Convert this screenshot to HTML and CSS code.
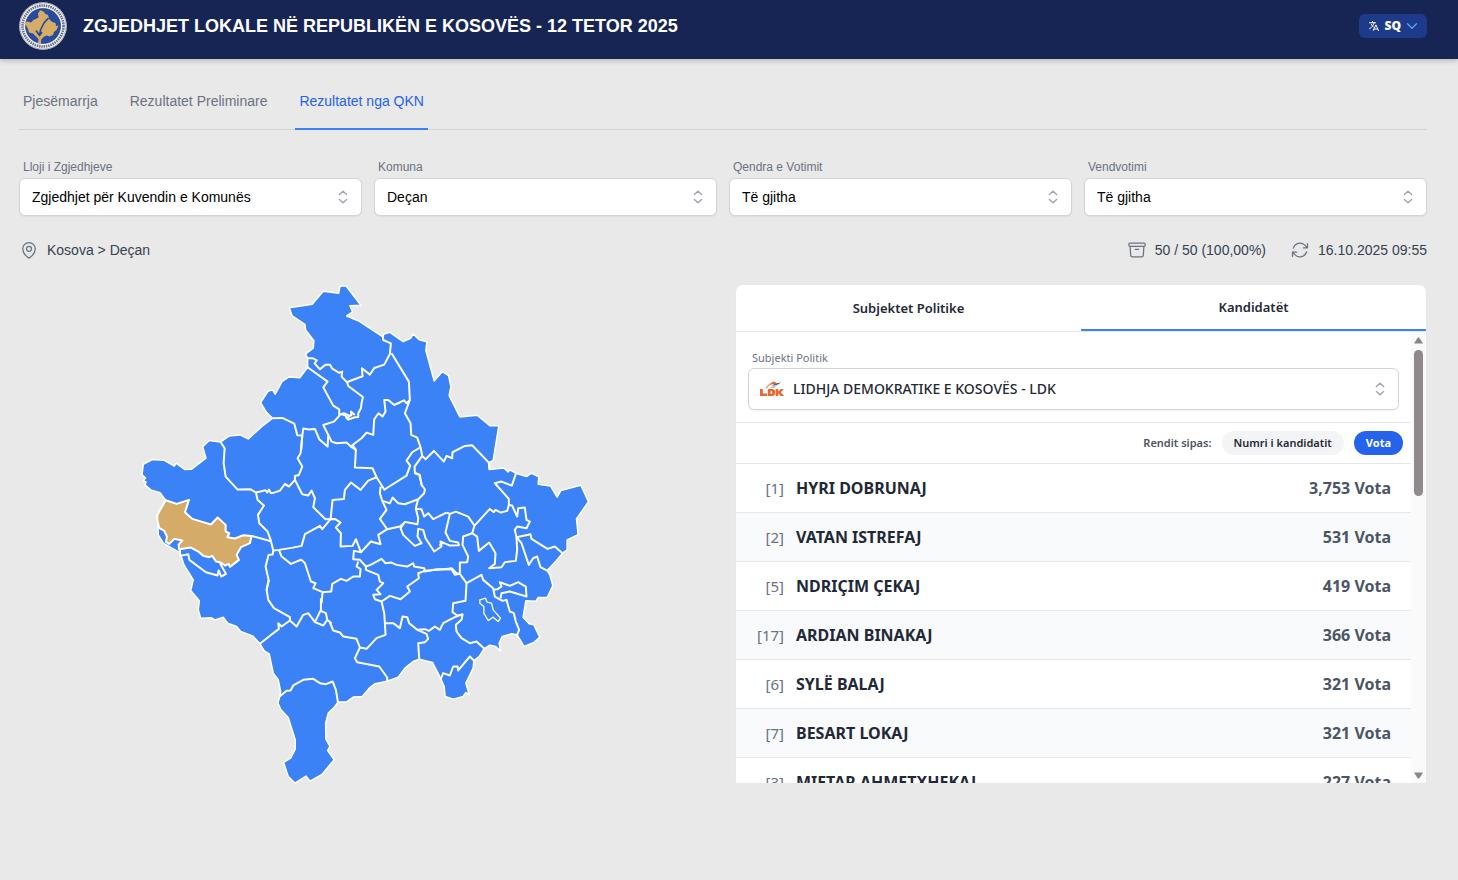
FILE: index.html
```html
<!DOCTYPE html>
<html lang="sq">
<head>
<meta charset="utf-8">
<meta name="viewport" content="width=device-width, initial-scale=1">
<title>Zgjedhjet Lokale në Republikën e Kosovës</title>
<link rel="stylesheet" href="styles.css">
</head>
<body>
<header class="topbar">
  <svg class="emblem" viewBox="0 0 48 48" aria-hidden="true">
    <circle cx="24" cy="24" r="23.8" fill="#f3f3f5"/>
    <circle cx="24" cy="24" r="23.2" fill="none" stroke="#8d93a5" stroke-width=".8"/>
    <circle cx="24" cy="24" r="20.500" fill="none" stroke="#6a7188" stroke-width="2.600" stroke-dasharray="1.500 .8"/>
    <circle cx="24" cy="24" r="17.600" fill="#1f459a" stroke="#263c78" stroke-width=".6"/>
    <g fill="none" stroke="#4a70b4" stroke-width=".4"><circle cx="24" cy="24" r="16.200"/><circle cx="24" cy="24" r="14.500"/><circle cx="24" cy="24" r="12.500"/></g>
    <path fill="#d6ac67" d="M19.500 10.500l2-2.200 3 1.200 2 2.500 2.500 1 1.500 4.500 3 2.500 3 1 .5 3 2.500-.5-2 4.500-2.500 2-1 3-3.500 1.500-3-1-3.500 2-2 2.500v3.500l-1.500 1-1.500-2 1-3-3-3-3-3-4-1-1-3.500-1.500-3-2.500-2.500 3-2 4 1 2.500-2.500 5-2.500-.5-4z"/>
    <path fill="none" stroke="#1f459a" stroke-width="1.500" d="M17 28.500l3.500 5 1-5.500 3.500-7 4.500-5M20.500 33.500l2.500-3.500"/>
    <path stroke="#d6ac67" stroke-width="2.400" d="M20.800 34.500v5"/>
  </svg>
  <h1 class="title">ZGJEDHJET LOKALE NË REPUBLIKËN E KOSOVËS - 12 TETOR 2025</h1>
  <button class="lang" type="button" aria-haspopup="menu">
    <svg class="lang-icon" viewBox="0 0 24 24" aria-hidden="true"><path d="m10.500 21 5.250-11.250L21 21m-9-3h7.500M3 5.621a48.474 48.474 0 0 1 6-.371m0 0c1.120 0 2.233.038 3.334.114M9 5.250V3m3.334 2.364C11.176 10.658 7.690 15.080 3 17.502m9.334-12.138c.896.061 1.785.147 2.666.257m-4.589 8.495a18.023 18.023 0 0 1-3.827-5.802"/></svg>
    <span>SQ</span>
    <svg class="lang-chevron" viewBox="0 0 24 24" aria-hidden="true"><path d="m21 7.500-9 9-9-9"/></svg>
  </button>
</header>

<main class="page">
  <nav class="tabs">
    <a class="tab" href="#pjesemarrja">Pjesëmarrja</a>
    <a class="tab" href="#preliminare">Rezultatet Preliminare</a>
    <a class="tab tab-active" href="#qkn" aria-current="page">Rezultatet nga QKN</a>
  </nav>

  <form class="filters">
    <div class="field">
      <label for="lloji">Lloji i Zgjedhjeve</label>
      <div class="select-box"><select id="lloji"><option>Zgjedhjet për Kuvendin e Komunës</option></select>
      <svg class="updown" viewBox="0 0 20 20" aria-hidden="true"><path d="M6 7.200 10 3.700l4 3.500M6 12.800l4 3.500 4-3.500"/></svg></div>
    </div>
    <div class="field">
      <label for="komuna">Komuna</label>
      <div class="select-box"><select id="komuna"><option>Deçan</option></select>
      <svg class="updown" viewBox="0 0 20 20" aria-hidden="true"><path d="M6 7.200 10 3.700l4 3.500M6 12.800l4 3.500 4-3.500"/></svg></div>
    </div>
    <div class="field">
      <label for="qendra">Qendra e Votimit</label>
      <div class="select-box"><select id="qendra"><option>Të gjitha</option></select>
      <svg class="updown" viewBox="0 0 20 20" aria-hidden="true"><path d="M6 7.200 10 3.700l4 3.500M6 12.800l4 3.500 4-3.500"/></svg></div>
    </div>
    <div class="field">
      <label for="vendvotimi">Vendvotimi</label>
      <div class="select-box"><select id="vendvotimi"><option>Të gjitha</option></select>
      <svg class="updown" viewBox="0 0 20 20" aria-hidden="true"><path d="M6 7.200 10 3.700l4 3.500M6 12.800l4 3.500 4-3.500"/></svg></div>
    </div>
  </form>

  <div class="status">
    <div class="status-item">
      <svg class="icon" viewBox="0 0 24 24" aria-hidden="true"><path d="M15 10.500a3 3 0 1 1-6 0 3 3 0 0 1 6 0Z"/><path d="M19.500 10.500c0 7.142-7.500 11.250-7.500 11.250S4.500 17.642 4.500 10.500a7.500 7.500 0 1 1 15 0Z"/></svg>
      <span>Kosova &gt; Deçan</span>
    </div>
    <div class="status-group">
      <div class="status-item">
        <svg class="icon" viewBox="0 0 24 24" aria-hidden="true"><path d="m20.250 7.500-.625 10.632a2.250 2.250 0 0 1-2.247 2.118H6.622a2.250 2.250 0 0 1-2.247-2.118L3.750 7.500M10 11.250h4M3.375 7.500h17.250c.621 0 1.125-.504 1.125-1.125v-1.500c0-.621-.504-1.125-1.125-1.125H3.375c-.621 0-1.125.504-1.125 1.125v1.500c0 .621.504 1.125 1.125 1.125Z"/></svg>
        <span>50 / 50 (100,00%)</span>
      </div>
      <div class="status-item">
        <svg class="icon" viewBox="0 0 24 24" aria-hidden="true"><path d="M16.023 9.348h4.992v-.001M2.985 19.644v-4.992m0 0h4.992m-4.993 0 3.181 3.183a8.250 8.250 0 0 0 13.803-3.700M4.031 9.865a8.250 8.250 0 0 1 13.803-3.700l3.181 3.182m0-4.991v4.990"/></svg>
        <span>16.10.2025 09:55</span>
      </div>
    </div>
  </div>

  <div class="content">
    <div class="map-panel">
      <svg class="map" viewBox="140 284 450 500" role="img" aria-label="Harta e komunave të Kosovës">
        <path class="land" d="M289.300 307.700L292.300 316 305 324.300 305.700 330 314 340.700 313.300 348.300 305.700 354 307.700 358.300V367.300L300 377.700 289 377 282.300 381.300 275.300 394.300 272.700 390 268.300 391 260.700 402.700 266.700 412.700 272.700 418.300 261.700 426.700 248.300 439 240 435 229.300 436 220.700 442 209 440.700 202.700 446.700 206 458.300 191.700 469.300 185 469.700 176 463.300 174.300 466.300 164 460.300 152.300 459.700 143.300 464.300 142 475 145.500 478 143.500 481 146 482 145 485 150.700 490 160 492.700 165.700 500.300 157.300 515 158.300 535 163.300 543.300 180 552.700 184 565 193.300 580 190.700 590.700 199.300 601 198.300 610 200.700 618.300 211.700 618 215 620 223.300 617.300 227.700 623.300 236.700 626.700 240.700 631.700 252.700 636 260 644 264.300 651 269.300 654 273.300 673.300 278.300 680 280.700 691.700 279.700 696.700 278 703.300 281 710 288.300 717.700 295.300 740V749.300L290.700 758.300 283.700 762.700 288.300 776.700 295 783.300 306 776.300 310 781.300 321.700 775 334.300 760 327.700 750.700 330 746.700 326 739.300 325.700 723.300 328.300 713.300 335 706.700 338 702.300 346.700 702 353.300 697.300 362.300 696.700 370 687.700 375 684 387.300 681.300 398.300 677.300 405 668.300 413.300 661.700 419.300 659.300 432.700 662.700 441 679 444.300 686.700 445.300 696.700 453.300 699.300 463.300 696.700 466 692.700 469.300 695 466 683.300 473.300 668.300 474 660.700 479.300 656.700 484.300 648.700 490 645.300 496 646.700 500.700 651.300 499.300 643.300 502.300 636.700 511.700 634 517.300 635 524.300 646.700 534 642.700 540 637.300 534 625 529.300 624 523.300 617.300 526 601 536 601.300 538.300 597.700 547.300 597.700 553 585.700 550 575 547.300 570.700 556.700 560.700 562.700 553.300 567.300 550V540L578.300 534.700 576.700 519 588.700 501.700 581 485.300 561 490.700 557.300 497.300 550.700 486 538.300 484.300 539 477 531.700 473.300 526.700 476.700 516 473.300 510 470 508.300 472 504 468 489.300 469.700 488.700 462.700 493.300 460.700 499 425.700H490L477.300 415.300 460 417 449.300 395.700 451 386.700 448.700 375.700 442.300 371.700 434.300 381 426 350.700 427 341.700 419.300 339.700 413.300 334 410.700 338.300 403.300 341.700 390 332.300 384.300 334 382.700 336.700 358.300 320.700 346.700 316 352.700 312 350 305.700 361 305.300 346 285.700 340 286.300 338.700 293.300 323.300 291.300 312.300 304.300Z"/>
        <g class="borders" transform="translate(240 280) scale(.33333)">
          <path d="M203 235L219 235 231 241 224 250 240 268 257 254 270 254 277 266 298 279 307 275 305 290 322 308 325 318 369 351 365 370 363 385 355 400 355 411 345 412 325 419 315 405 298 402"/>
          <path d="M322 306L368 289 366 265 390 284 403 264 433 254 450 222 453 190 430 180 428 165"/>
          <path d="M203 262L263 305 250 322 280 377 298 388 298 408 282 425 250 435 265 465 263 500 238 478 225 447 207 449 190 446 187 467 172 466 163 431 127 414 98 415"/>
          <path d="M300 404L312 400 330 408 320 415 335 405 333 395 345 405M187 467L184 510M333 500L348 510"/>
          <path d="M265 465L275 485 290 490 320 488 333 500 345 490 365 475 380 458 400 465 403 418 416 400 428 410 437 395 433 360 445 360 463 375 480 368"/>
        </g>
        <g class="borders" transform="translate(370 320) scale(.33333)">
          <path d="M65 100L117 185 120 240 105 280 122 310 124 345 142 353 152 382 157 408 167 418 192 393 222 425 230 408 247 415 248 397 285 378 307 376 357 428 360 447"/>
          <path d="M75 254L102 241 110 250 120 240M152 382L127 397 110 422 121 437 110 467 45 508"/>
          <path d="M157 408L134 440 135 460 148 465 157 500"/>
        </g>
        <g class="borders" transform="translate(130 420) scale(.33333)">
          <path d="M272 66L284 85 281 130 287 170 323 209 362 208 378 218 407 211 412 218 417 209 422 219 430 219 450 212 465 192 477 200 495 180 495 168 507 165 517 140 503 115 512 100 517 47"/>
          <path d="M378 218L383 240 402 257 384 285 388 310 413 335 423 362"/>
          <path d="M365 348L423 364 430 392 447 390 485 384"/>
          <path d="M430 392L428 404 416 405 407 440 416 480 410 510M447 390L455 410 483 432 515 419"/>
          <path d="M150 388L150 408 175 403 178 420 228 457 263 467 266 452 274 470 288 462 270 430"/>
          <path class="selected" d="M107 241L140 252 177 240 165 277 187 297 243 314 263 293 287 315 287 335 298 340 292 352 315 356 340 346 365 348 360 370 333 382 320 405 327 420 300 441 296 432 285 437 270 427 258 425 247 408 238 412 220 408 205 395 183 383 147 388 146 374 157 362 133 357 118 372 108 366 111 350 102 332 88 325 82 300 82 285Z"/>
        </g>
        <g class="borders" transform="translate(290 430) scale(.33333)">
          <path d="M15 150L37 193 55 197 65 182 75 205 70 232 107 268 135 267 152 278 138 293 153 310 152 350 188 348 198 328 213 367 192 363 190 388 210 390 228 410 242 405 275 387 287 400 305 398 320 405 352 410 370 400 373 410 403 415 405 425 440 418 480 418"/>
          <path d="M122 268L97 298 90 288 45 313 35 348 5 354M122 268L128 210 162 207 165 180 183 158 212 180 235 152 260 142 248 115 195 113 198 60 187 45"/>
          <path d="M260 142L285 182M272 170L270 190 277 213 290 240 270 267 292 298 330 290 340 282"/>
          <path d="M277 213L300 220 308 203 325 220 345 223 385 208 403 190 405 178 395 165 390 135 375 128"/>
          <path d="M385 208L380 225 378 237 385 265 383 283 345 276 332 295 340 315 375 348 395 340 383 320 385 297 400 300 407 325 433 365 455 350 452 335 462 342"/>
          <path d="M378 237L395 238 403 260 415 250 430 268 470 248M292 298L265 315 272 343 243 335 213 367"/>
          <path d="M205 395L200 410 212 418 210 440 190 440 170 453 153 447 127 462 124 485 98 487 70 475 77 460 63 455 45 400 35 390M98 487L95 520"/>
        </g>
        <g class="borders" transform="translate(430 440) scale(.33333)">
          <path d="M258 102L246 137 215 125 195 130 237 177 237 195 232 213 213 218 197 210 192 217 180 207 134 257 115 230 78 215 60 222 47 278 60 303 85 308 87 316 60 317 35 306 30 318"/>
          <path d="M50 218L60 222M237 195L247 197 262 230 265 205 285 203 290 240 300 245 290 265 262 260 255 270 260 292 302 283 305 297 353 327 375 320 398 340"/>
          <path d="M260 292L275 310 297 375 310 355 322 350 332 382 352 392"/>
          <path d="M134 257L127 280 100 290 98 315 115 350 112 367 90 368 90 402 110 430 155 405 160 420 190 445 195 470 218 483 230 480 240 515 252 520 258 545 268 570 262 585"/>
          <path d="M127 280L142 290 147 333 178 308 197 340 195 372 178 385 215 382 225 367 258 363 262 330 260 292M90 402L80 400 65 385 45 388"/>
          <path d="M110 430L107 483 70 490 68 517 82 527 98 525 95 540 78 555 80 575 95 595 120 610 140 605 163 626"/>
          <path d="M190 450L203 448 215 440 210 427 240 438 265 427 288 440 290 470 240 455 215 460 212 475"/>
          <path class="thin" d="M150 480L167 475 172 487 185 490 190 510 212 535 205 545 190 532 175 542 162 520 162 500 150 490Z"/>
        </g>
        <g class="borders" transform="translate(180 530) scale(.33333)">
          <path d="M240 342L270 318 297 297 295 280 305 290 330 272 330 262 282 235 265 210 260 180 267 150M330 272L350 290 370 255 385 250 405 277 423 240 423 205"/>
          <path d="M405 277L430 287 442 270 438 250 423 243M442 270L455 280"/>
          <path d="M299 500L320 483 332 482 340 467 370 450 400 447 420 460 438 463 458 455 468 480 474 517"/>
        </g>
        <g class="borders" transform="translate(330 540) scale(.33333)">
          <path d="M0 248L10 272 30 278 40 290 80 297 90 323 75 355 82 367 148 380 172 413 172 424M90 323L110 327 140 295 167 285 165 250 163 220 155 185 135 178 130 165 152 163 140 150 160 130 150 125 145 105 108 90 108 80"/>
          <path d="M155 185L180 168 212 178 240 155 232 140 267 115 265 100 285 93 345 88 365 88 375 105 390 102"/>
          <path d="M165 250L190 250 210 265 218 230 232 232 238 250 262 270 290 282 295 297 285 307 265 310 268 358M262 270L285 268 297 273 315 260 330 270 340 250 372 233 400 222"/>
          <path d="M333 417L340 400 360 407 370 380 383 380 385 392 420 350 432 362"/>
        </g>
      </svg>
    </div>

    <section class="results">
      <div class="result-tabs" role="tablist">
        <button class="result-tab" type="button" role="tab" aria-selected="false">Subjektet Politike</button>
        <button class="result-tab result-tab-active" type="button" role="tab" aria-selected="true">Kandidatët</button>
      </div>
      <div class="scroll-area">
        <div class="scroll-content">
          <div class="party">
            <label for="subjekti">Subjekti Politik</label>
            <div class="select-box party-select">
              <svg class="party-logo" viewBox="0 0 24 16" aria-hidden="true">
                <path fill="#ec6730" d="M0 8h2.800v4.600H7V15H0zM7.800 8h5.200l2 1.600v3.800L13 15H7.800zm2.700 2.300v2.400h1.700v-2.400zM15.600 8h2.700v2.600L20.800 8h3l-3 3.300L24 15h-3.400l-2.300-2.800V15h-2.700z"/>
                <path fill="#f0a47e" d="M5 7.500C7 4 10 2 13 1l2 1.200C11 3 8.500 5 7 7.500z"/>
                <path fill="#ec6730" d="M9.500 3.500 13.500.500l3 1.300-1.500 1.400z"/>
                <path fill="#5d6069" d="m12 5 3-2.500 6-1-3 2-3.500 1z"/>
                <path fill="#bdbdc0" d="M10 7c2-2 5-2.500 8-3l-4 3z"/>
              </svg>
              <select id="subjekti"><option>LIDHJA DEMOKRATIKE E KOSOVËS - LDK</option></select>
              <svg class="updown" viewBox="0 0 20 20" aria-hidden="true"><path d="M6 7.200 10 3.700l4 3.500M6 12.800l4 3.500 4-3.500"/></svg>
            </div>
          </div>
          <div class="sort">
            <span>Rendit sipas:</span>
            <button class="pill" type="button">Numri i kandidatit</button>
            <button class="pill pill-active" type="button">Vota</button>
          </div>
          <table class="candidates">
            <tbody>
              <tr><td class="num">[1]</td><td class="name">HYRI DOBRUNAJ</td><td class="votes">3,753 Vota</td></tr>
              <tr><td class="num">[2]</td><td class="name">VATAN ISTREFAJ</td><td class="votes">531 Vota</td></tr>
              <tr><td class="num">[5]</td><td class="name">NDRIÇIM ÇEKAJ</td><td class="votes">419 Vota</td></tr>
              <tr><td class="num">[17]</td><td class="name">ARDIAN BINAKAJ</td><td class="votes">366 Vota</td></tr>
              <tr><td class="num">[6]</td><td class="name">SYLË BALAJ</td><td class="votes">321 Vota</td></tr>
              <tr><td class="num">[7]</td><td class="name">BESART LOKAJ</td><td class="votes">321 Vota</td></tr>
              <tr><td class="num">[3]</td><td class="name">MIFTAR AHMETXHEKAJ</td><td class="votes">227 Vota</td></tr>
            </tbody>
          </table>
        </div>
        <div class="scrollbar" aria-hidden="true">
          <svg class="arrow" viewBox="0 0 9 7"><path d="M3.800.5h1.400L9 6.500H0z"/></svg>
          <div class="track"><div class="thumb"></div></div>
          <svg class="arrow" viewBox="0 0 9 7"><path d="M3.800 6.500h1.400L9 .5H0z"/></svg>
        </div>
      </div>
    </section>
  </div>
</main>
</body>
</html>
```
FILE: styles.css
```css
* { box-sizing: border-box; }
body {
  margin: 0;
  min-height: 100vh;
  background: #e9e9e9;
  color: #374151;
  font: 14px/20px "Liberation Sans", Arial, sans-serif;
}
button, select { font: inherit; color: inherit; }
button { border: 0; background: none; padding: 0; cursor: pointer; }

.topbar {
  display: flex;
  align-items: center;
  height: 59px;
  padding: 0 31px 7px 19px;
  background: #172554;
  box-shadow: 0 2px 5px rgba(0, 0, 0, .2);
}
.emblem { width: 48px; height: 48px; flex: none; }
.title { margin: 0 auto 0 16px; color: #fff; font-size: 18px; line-height: 28px; font-weight: 700; }
.lang {
  display: flex;
  align-items: center;
  gap: 5px;
  height: 24px;
  padding: 0 9px;
  border-radius: 6px;
  background: #1e3a8a;
  color: #fff;
  font: 900 12px/16px "Noto Sans", sans-serif;
}
.lang svg { fill: none; stroke: #fff; stroke-width: 2; stroke-linecap: round; stroke-linejoin: round; width: 12px; height: 12px; }
.lang .lang-chevron { stroke: #60a5fa; stroke-width: 2.4; }

.page { padding: 0 31px 24px 19px; }
.tabs { display: flex; gap: 24px; margin-top: 14px; border-bottom: 1px solid #d1d3d6; }
.tab {
  margin-bottom: -1px;
  padding: 18px 4px 17px;
  border-bottom: 2px solid transparent;
  color: #6b7280;
  text-decoration: none;
}
.tab-active { border-color: #3b82f6; color: #2563eb; }

.filters { display: grid; grid-template-columns: repeat(4, 1fr); gap: 12px; margin-top: 28px; }
label { display: block; padding: 0 4px; color: #6b7280; font-size: 12px; line-height: 18px; }
.field label { margin-bottom: 2px; }
.select-box { position: relative; }
.select-box select {
  display: block;
  width: 100%;
  height: 38px;
  padding: 0 36px 0 12px;
  appearance: none;
  border: 1px solid #d1d5db;
  border-radius: 6px;
  background: #fff;
  box-shadow: 0 1px 2px rgba(0, 0, 0, .06);
  color: #000;
}
.updown {
  position: absolute;
  right: 10px;
  top: 0;
  bottom: 0;
  margin: auto 0;
  width: 18px;
  height: 18px;
  fill: none;
  stroke: #9ca3af;
  stroke-width: 1.6;
  stroke-linecap: round;
  stroke-linejoin: round;
  pointer-events: none;
}

.status { display: flex; justify-content: space-between; margin-top: 24px; }
.status-group { display: flex; gap: 24px; }
.status-item { display: flex; align-items: center; gap: 8px; }
.icon { width: 20px; height: 20px; fill: none; stroke: #6b7280; stroke-width: 1.5; stroke-linecap: round; stroke-linejoin: round; }

.content { display: grid; grid-template-columns: 1fr 1fr; gap: 24px; align-items: start; margin-top: 24px; }
.map-panel { display: flex; justify-content: center; }
.map { width: 65%; max-height: 500px; }
.land { fill: #3b82f6; stroke: #fff; stroke-width: 1.5; stroke-linejoin: round; }
.borders { fill: none; stroke: #fff; stroke-width: 6; stroke-linejoin: round; }
.borders .selected { fill: #d4ac68; }
.borders .thin { stroke-width: 4; }

.results {
  overflow: hidden;
  border: 1px solid #e5e7eb;
  border-bottom: 0;
  border-radius: 8px 8px 0 0;
  background: #fff;
  font-family: "Noto Sans", sans-serif;
}
.result-tabs { display: flex; border-bottom: 1px solid #e5e7eb; }
.result-tab { flex: 1; height: 46px; color: #1f2937; font-size: 13px; font-weight: 600; }
.result-tab-active { border-bottom: 2px solid #3b82f6; }
.scroll-area { display: flex; height: 451px; overflow: hidden; }
.scroll-content { flex: 1; overflow: hidden; }
.party { padding: 17px 12px 12px; border-bottom: 1px solid #e5e7eb; }
.party label { margin-bottom: 1px; font-size: 11px; }
.party-select select { height: 42px; padding-left: 44px; color: #1f2937; font-weight: 500; }
.party-logo { position: absolute; left: 12px; top: 13px; width: 24px; height: 16px; }
.sort {
  display: flex;
  align-items: center;
  justify-content: flex-end;
  gap: 10px;
  padding: 8px;
  color: #4b5563;
  font-size: 11px;
  font-weight: 600;
  line-height: 24px;
  border-bottom: 1px solid #e5e7eb;
}
.pill { height: 24px; padding: 0 12px; border-radius: 12px; background: #f3f4f6; color: #1f2937; }
.pill-active { background: #2563eb; color: #fff; font-weight: 700; }
.candidates { width: 100%; border-spacing: 0; font-size: 16px; }
.candidates tr:nth-child(even) { background: #f9fafb; }
.candidates td { height: 49px; padding: 0; border-bottom: 1px solid #e5e7eb; }
.candidates .num { width: 48px; text-align: right; color: #6b7280; font-size: 15px; }
.candidates .name { padding-left: 12px; color: #1f2937; font-weight: 700; }
.candidates .votes { padding-right: 20px; text-align: right; color: #4b5563; font-weight: 700; }
.scrollbar {
  display: flex;
  flex-direction: column;
  align-items: center;
  gap: 6px;
  width: 15px;
  padding: 5px 0 4px;
  background: #fafafa;
}
.arrow { width: 9px; height: 7px; fill: #8b8586; }
.track { flex: 1; width: 9px; }
.thumb { height: 35%; border-radius: 5px; background: #8f898a; }
```
